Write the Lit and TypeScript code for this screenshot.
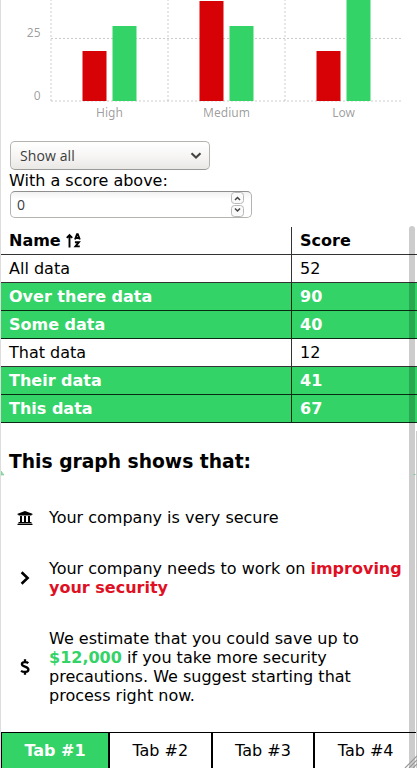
import { LitElement, html, svg, css } from "lit";
import { customElement, state } from "lit/decorators.js";
import { classMap } from "lit/directives/class-map.js";

@customElement("score-chart")
class ScoreChart extends LitElement {
  static styles = css`
    :host { display: block; height: 130px; }
    svg { display: block; }
    .grid { stroke: rgba(0, 0, 0, 0.2); stroke-width: 1; stroke-dasharray: 2 2; }
    .low { fill: #d70206; }
    .high { fill: #34d367; }
    text { font: 12px "Noto Sans", sans-serif; fill: rgba(0, 0, 0, 0.4); }
    .tick { text-anchor: end; }
    .label { text-anchor: middle; }
  `;
  private groups = [
    { name: "High", values: [20, 30] },
    { name: "Medium", values: [40, 30] },
    { name: "Low", values: [20, 60] },
  ];
  render() {
    return html`<svg width="416" height="130" viewBox="1 0 416 130">
      ${[51, 168, 285].map((x) => svg`<line class="grid" x1=${x} x2=${x} y1="101" y2="-11"/>`)}
      ${[101, 38.5].map((y) => svg`<line class="grid" x1="51" x2="401" y1=${y} y2=${y}/>`)}
      ${this.groups.map((g, i) => svg`
        <rect class="low" x=${82.5 + i * 117} y=${101 - g.values[0] * 2.5} width="24" height=${g.values[0] * 2.5}/>
        <rect class="high" x=${112.5 + i * 117} y=${101 - g.values[1] * 2.5} width="24" height=${g.values[1] * 2.5}/>
        <text class="label" x=${109.5 + i * 117} y="117">${g.name}</text>`)}
      <text class="tick" x="40.5" y="37">25</text>
      <text class="tick" x="40.5" y="100">0</text>
    </svg>`;
  }
}

@customElement("app-root")
class AppRoot extends LitElement {
  static styles = css`
    :host {
      display: block; position: relative; box-sizing: border-box; height: 768px; overflow: hidden;
      border-left: 1px solid #ddd; background: #fff; color: #000;
      font: 16px/19px "DejaVu Sans", sans-serif;
    }
    .filters { display: flex; flex-direction: column; align-items: flex-start; height: 97px; padding: 11px 8px 0; box-sizing: border-box; }
    .select, .number {
      display: flex; align-items: center; justify-content: space-between; box-sizing: border-box;
      margin-left: 1px; border: 1px solid #b5b3b0; border-radius: 5px; color: #3c3c3c;
      font: 14px "Open Sans", sans-serif;
    }
    .select { width: 200px; height: 29px; padding: 0 7px 0 9px; background: linear-gradient(#fff, #f7f6f5 50%, #e9e8e5); border-bottom-color: #999; }
    .select span { letter-spacing: 0.1px; }
    .caption { height: 21px; line-height: 21px; }
    .number { width: 242px; height: 27px; padding: 0 6px; background: linear-gradient(#f2f2f2, #fff 30%); border-top-color: #8f8f8f; }
    .steps { display: flex; flex-direction: column; gap: 1px; }
    .steps svg { display: block; }
    table { width: 416px; height: 196px; border-collapse: separate; border-spacing: 0; table-layout: fixed; }
    th, td { box-sizing: border-box; height: 28px; padding: 0 8px; text-align: left; border-bottom: 1px solid rgba(0, 0, 0, 0.8); }
    th:first-child, td:first-child { width: 291px; border-right: 1px solid rgba(0, 0, 0, 0.8); }
    .over { background: #34d367; color: #fff; font-weight: bold; }
    .sort { display: inline-block; vertical-align: -2px; }
    h2 { margin: 0; padding: 27px 8px 0; font-size: 18.72px; line-height: 23px; }
    .item { display: grid; grid-template-columns: 32px 1fr; gap: 8px; align-items: center; padding: 0 8px; }
    .item svg { justify-self: center; display: block; }
    .item p { margin: 0; }
    .points { display: grid; gap: 32px; padding-top: 35px; }
    .bad { color: #e01024; font-weight: bold; }
    .good { color: #34d367; font-weight: bold; }
    .tabs { display: flex; margin-top: 27px; }
    .tab { box-sizing: border-box; height: 40px; padding-top: 8px; flex: 0 0 102.67px; border: 1px solid #000; text-align: center; }
    .tab.active { flex-basis: 108px; background: #34d367; color: #fff; font-weight: bold; }
    .thumb { position: absolute; right: 2px; top: 226px; bottom: 0; width: 6px; border-radius: 3px 3px 0 0; background: rgba(0, 0, 0, 0.2); }
    .edge { position: absolute; right: 0; top: 431px; bottom: 0; width: 1px; background: #ccc; }
    .corners { position: absolute; left: -1px; top: 470px; }
    .grip { position: absolute; right: 0; bottom: 0; }
  `;

  @state() private active = 0;

  private rows: [string, number][] = [
    ["All data", 52], ["Over there data", 90], ["Some data", 40],
    ["That data", 12], ["Their data", 41], ["This data", 67],
  ];
  private marked = new Set([1, 2, 4, 5]);

  render() {
    return html`
      <score-chart></score-chart>
      <div class="filters">
        <div class="select"><span>Show all</span>
          <svg width="12" height="8" viewBox="0 0 12 8"><path d="M1.5 1.2 6 5.5l4.5-4.3" fill="none" stroke="#444" stroke-width="2.1"/></svg>
        </div>
        <div class="caption">With a score above:</div>
        <div class="number"><span>0</span>
          <div class="steps">
            ${["M4 8 6.5 5.5 9 8", "M4 3.5 6.5 6 9 3.5"].map((d) => html`<svg width="14" height="12" viewBox="0 0 14 12">
              <rect x=".5" y=".5" width="12" height="11" rx="3" fill="#fafafa" stroke="#b8b8b8"/>
              <path d=${d} fill="none" stroke="#444" stroke-width="1.5"/></svg>`)}
          </div>
        </div>
      </div>
      <table>
        <tr><th>Name <svg class="sort" width="16" height="15" viewBox="0 0 16 15">
          <path d="M3.5 14.500V2M.8 4.800 3.500 2 6.200 4.800" fill="none" stroke="#000" stroke-width="1.900"/>
          <path d="M9 6.500 11 1.200h.8l2 5.300M9.800 5H13M8.900 9.200h4L9.500 13.400h4.300" fill="none" stroke="#000" stroke-width="1.900"/>
        </svg></th><th>Score</th></tr>
        ${this.rows.map(([name, score], i) => html`<tr class=${classMap({ over: this.marked.has(i) })}><td>${name}</td><td>${score}</td></tr>`)}
      </table>
      <h2>This graph shows that:</h2>
      <div class="points">
        <div class="item">
          <svg width="16" height="16" viewBox="0 0 512 512"><path d="M496 128v16a8 8 0 0 1-8 8h-24v12c0 6.600-5.400 12-12 12H60c-6.600 0-12-5.400-12-12v-12H24a8 8 0 0 1-8-8v-16a8 8 0 0 1 4.900-7.400l232-88a8 8 0 0 1 6.100 0l232 88A8 8 0 0 1 496 128zm-24 304H40c-13.300 0-24 10.700-24 24v16a8 8 0 0 0 8 8h464a8 8 0 0 0 8-8v-16c0-13.300-10.700-24-24-24zM96 192v192H60c-6.600 0-12 5.400-12 12v20h416v-20c0-6.600-5.400-12-12-12h-36V192h-64v192h-64V192h-64v192h-64V192z"/></svg>
          <p>Your company is very secure</p>
        </div>
        <div class="item">
          <svg width="10" height="16" viewBox="0 0 10 16"><path d="M1.600 2.200 7.600 8 1.600 13.800" fill="none" stroke="#000" stroke-width="2.600"/></svg>
          <p>Your company needs to work on <span class="bad">improving your security</span></p>
        </div>
        <div class="item">
          <svg width="10" height="16" viewBox="0 0 10 16"><path d="M8.300 4.100C7 3 1.900 2.500 1.900 5.200c0 2.700 6.500 2.300 6.500 5.300 0 3.200-5.200 2.800-7.400 1.400M5 .3v3M5 13v2.700" fill="none" stroke="#000" stroke-width="2.300"/></svg>
          <p>We estimate that you could save up to <span class="good">$12,000</span> if you take more security precautions. We suggest starting that process right now.</p>
        </div>
      </div>
      <div class="tabs">
        ${[1, 2, 3, 4].map((n, i) => html`<div class=${classMap({ tab: true, active: i === this.active })} @click=${() => (this.active = i)}>Tab #${n}</div>`)}
      </div>
      <div class="edge"></div>
      <div class="thumb"></div>
      <svg class="corners" width="417" height="6"><path d="M1 1v4h3zM413 4.500h3" fill="#8ee4aa" stroke="#6fc48b" stroke-width=".6"/></svg>
      <svg class="grip" width="13" height="13"><path d="M1 13 13 1M5 13l8-8M9 13l4-4" stroke="#999" stroke-width="1.200"/></svg>
    `;
  }
}
